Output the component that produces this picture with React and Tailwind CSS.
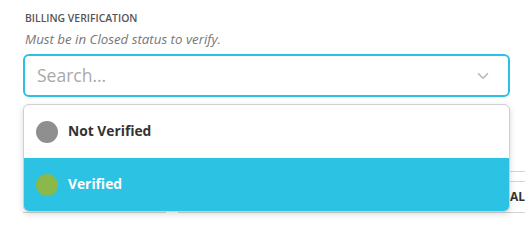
import { ChevronDown } from "lucide-react";

const options = [
  { label: "Not Verified", dot: "bg-[#8f8f8f]", active: false },
  { label: "Verified", dot: "bg-[#8ab84a]", active: true },
];

const App = () => {
  return (
    <section className="w-[525px] h-[222px] overflow-hidden bg-white pl-[23px] font-['Open_Sans',sans-serif]">
      <p className="pt-[12px] pl-[2px] text-[10.4px] font-semibold uppercase text-[#555] leading-[13px]">Billing Verification</p>
      <p className="mt-[6px] pl-[2px] text-[13.3px] italic text-[#777] leading-[16px]">Must be in Closed status to verify.</p>

      <div className="relative mt-[7px] w-[487px]">
        <div className="flex items-center h-[43px] border-2 border-[#2bc1e5] rounded-[6px] pl-[12px] pr-[16px]">
          <input
            type="text"
            placeholder="Search..."
            className="flex-1 bg-transparent text-[17.5px] text-[#333] placeholder:text-[#a9a9a9] focus:outline-none"
          />
          <ChevronDown size={18} strokeWidth={2.2} className="text-[#b9b9b9]" />
        </div>

        <ul className="absolute left-0 right-0 top-full mt-[7px] z-10 bg-white border border-[#cfcfcf] rounded-[6px] overflow-hidden shadow-[0_2px_6px_rgba(0,0,0,0.15)]">
          {options.map((o) => (
            <li
              key={o.label}
              className={`flex items-center gap-[10px] h-[53px] pl-[12px] text-[13.8px] font-bold ${o.active ? "bg-[#2cc2e4] text-white" : "text-[#333]"}`}
            >
              <span className={`w-[22px] h-[22px] rounded-full ${o.dot}`} />
              {o.label}
            </li>
          ))}
        </ul>
      </div>

      {/* content sitting behind the open menu */}
      <div className="mt-[74px] border-t border-[#d4d4d4]">
        <div className="flex gap-[12px] mt-[9px]">
          <div className="w-[143px] h-[32px] border-y border-[#d4d4d4]" />
          <div className="flex-1 h-[32px] border-y border-[#d4d4d4] flex items-center justify-end">
            <span className="text-[12px] font-bold text-[#333]">AL</span>
          </div>
        </div>
      </div>
    </section>
  );
};

export default App;
